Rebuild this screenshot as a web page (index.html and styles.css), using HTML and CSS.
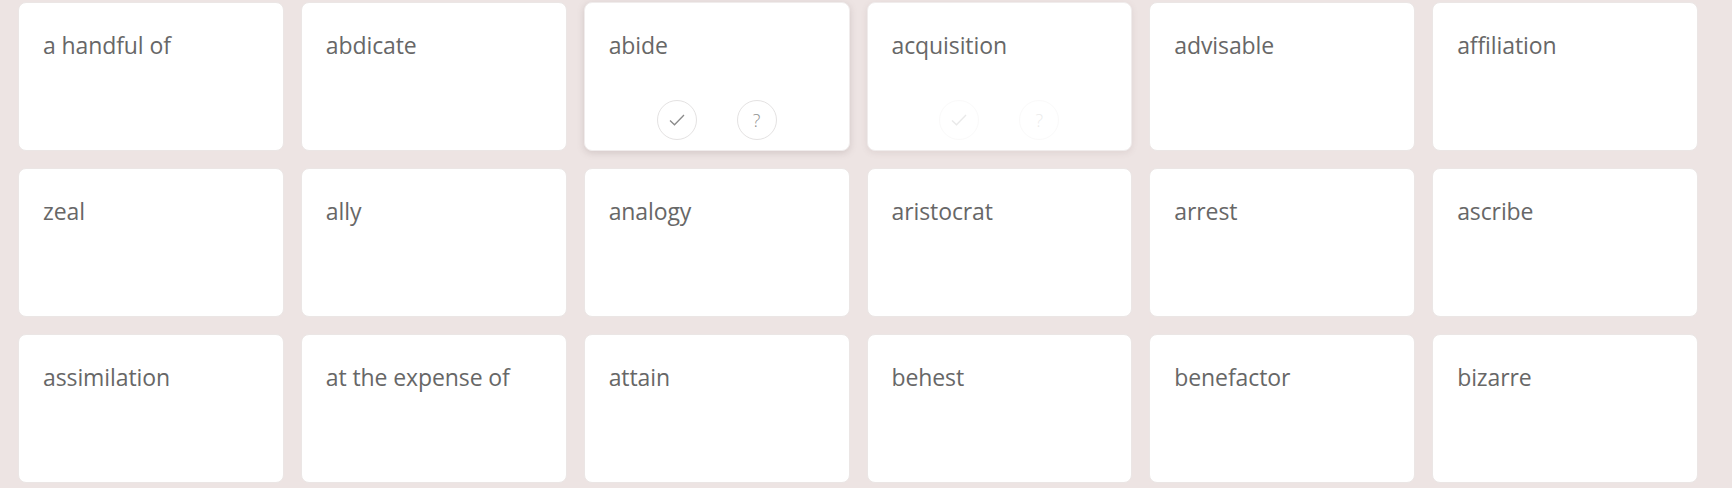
FILE: index.html
```html
<!DOCTYPE html>
<html lang="en">
<head>
<meta charset="utf-8">
<title>Words</title>
<link rel="stylesheet" href="styles.css">
</head>
<body>
<main class="grid">
  <div class="card"><div class="word">a handful of</div></div>
  <div class="card"><div class="word">abdicate</div></div>
  <div class="card card-hover"><div class="word">abide</div>
    <div class="actions">
      <span class="btn"><svg width="16" height="14" viewBox="0 0 16 14"><polyline points="1,7.5 5.5,11.8 15,2" fill="none" stroke="#8a8a8a" stroke-width="1.3"/></svg></span>
      <span class="btn"><span class="q">?</span></span>
    </div>
  </div>
  <div class="card card-fading"><div class="word">acquisition</div>
    <div class="actions">
      <span class="btn"><svg width="16" height="14" viewBox="0 0 16 14"><polyline points="1,7.5 5.5,11.8 15,2" fill="none" stroke="#8a8a8a" stroke-width="1.3"/></svg></span>
      <span class="btn"><span class="q">?</span></span>
    </div>
  </div>
  <div class="card"><div class="word">advisable</div></div>
  <div class="card"><div class="word">affiliation</div></div>
  <div class="card"><div class="word">zeal</div></div>
  <div class="card"><div class="word">ally</div></div>
  <div class="card"><div class="word">analogy</div></div>
  <div class="card"><div class="word">aristocrat</div></div>
  <div class="card"><div class="word">arrest</div></div>
  <div class="card"><div class="word">ascribe</div></div>
  <div class="card"><div class="word">assimilation</div></div>
  <div class="card"><div class="word">at the expense of</div></div>
  <div class="card"><div class="word">attain</div></div>
  <div class="card"><div class="word">behest</div></div>
  <div class="card"><div class="word">benefactor</div></div>
  <div class="card"><div class="word">bizarre</div></div>
</main>
</body>
</html>
```

FILE: styles.css
```css
html, body {
  margin: 0;
  padding: 0;
  background: #ede4e3;
}

body {
  font-family: "Open Sans", "Noto Sans", sans-serif;
  height: 488px;
  overflow: hidden;
}

.grid {
  display: grid;
  grid-template-columns: repeat(6, 1fr);
  grid-auto-rows: 149px;
  column-gap: 17px;
  row-gap: 17px;
  width: 1680px;
  margin: 2px 0 0 18px;
}

.card {
  background: #ffffff;
  border: 1px solid #ebe6e5;
  border-radius: 8px;
  box-sizing: border-box;
  padding: 27px 24px 10px;
  display: flex;
  flex-direction: column;
}

.card-hover {
  border-color: #f0ecec;
  box-shadow: 0 2px 7px rgba(120, 100, 100, 0.22);
}

.card-fading {
  border-color: #f0ecec;
  box-shadow: 0 2px 6px rgba(120, 100, 100, 0.12);
}

.word {
  font-size: 23px;
  line-height: 30px;
  color: #676767;
  letter-spacing: -0.1px;
}

.actions {
  margin-top: auto;
  display: flex;
  justify-content: center;
  gap: 40px;
}

.btn {
  width: 38px;
  height: 38px;
  border: 1px solid #e4e2e2;
  border-radius: 50%;
  display: flex;
  align-items: center;
  justify-content: center;
  background: #fff;
}

.q {
  font-family: "Open Sans", sans-serif;
  font-weight: 300;
  font-size: 18px;
  line-height: 1;
  color: #8f8f8f;
}

.card-fading .btn {
  opacity: 0.18;
}
```
